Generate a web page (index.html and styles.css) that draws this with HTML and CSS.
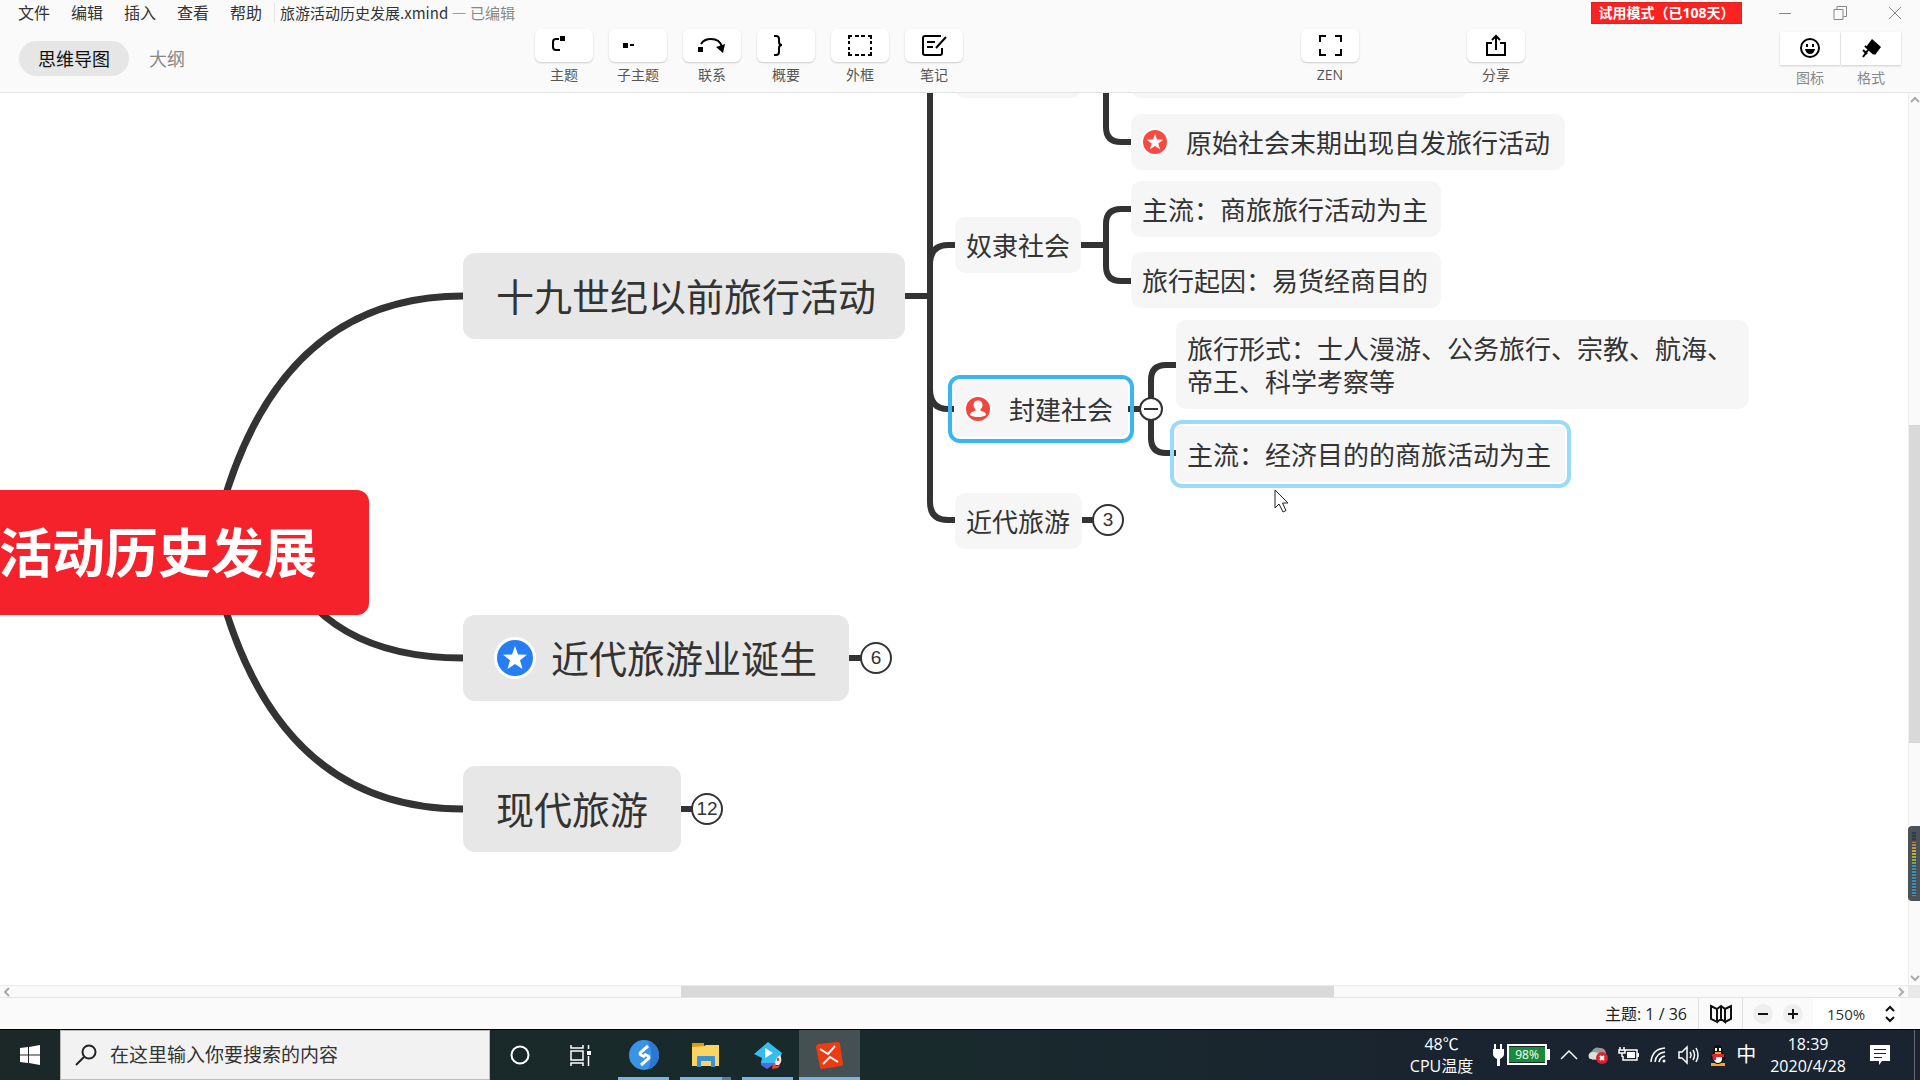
FILE: index.html
```html
<!DOCTYPE html>
<html lang="zh-CN">
<head>
<meta charset="utf-8">
<title>旅游活动历史发展.xmind</title>
<link rel="stylesheet" href="styles.css">
</head>
<body>
<header class="app-header">
  <div class="titlebar">
    <nav class="menu">
      <button>文件</button><button>编辑</button><button>插入</button><button>查看</button><button>帮助</button>
    </nav>
    <div class="doc-title">旅游活动历史发展.xmind <span class="muted">— 已编辑</span></div>
    <button class="trial">试用模式（已108天）</button>
    <div class="window-controls">
      <button aria-label="最小化"><svg width="14" height="14"><path d="M1 7.5h12"/></svg></button>
      <button aria-label="还原"><svg width="14" height="14"><path d="M1 3.5h9v10h-9zM4 3.500v-3h9.500v10h-3"/></svg></button>
      <button aria-label="关闭"><svg width="14" height="14"><path d="M1 1l12 12M13 1L1 13"/></svg></button>
    </div>
  </div>
  <div class="toolbar">
    <div class="views">
      <button class="view active">思维导图</button>
      <button class="view">大纲</button>
    </div>
    <div class="tools">
      <button class="tool"><span class="tool-face"><svg viewBox="0 0 58 33"><path class="l" d="M24 10h-3q-3 0-3 3v5q0 3 3 3h4"/><path d="M25 7h5v5h-5z"/></svg></span>主题</button>
      <button class="tool"><span class="tool-face"><svg viewBox="0 0 58 33"><path d="M14 14h5v5h-5zM21 15h4v2h-4z"/></svg></span>子主题</button>
      <button class="tool"><span class="tool-face"><svg viewBox="0 0 58 33"><path class="l" d="M18 15q3-5 10-5 9 0 11 8"/><path d="M15 18h5v5h-5zM33 18l9-3-2 9z"/></svg></span>联系</button>
      <button class="tool"><span class="tool-face"><svg viewBox="0 0 58 33"><path class="l" d="M17 7h2q3 0 3 3v3q0 3 3 3-3 0-3 3v4q0 3-3 3h-2"/></svg></span>概要</button>
      <button class="tool"><span class="tool-face"><svg viewBox="0 0 58 33"><path class="l" d="M21 7h-3v3M37 7h3v3M21 26h-3v-3M37 26h3v-3M24 7h4M30 7h4M24 26h4M30 26h4M18 12v3M18 18v3M40 12v3M40 18v3"/></svg></span>外框</button>
      <button class="tool"><span class="tool-face"><svg viewBox="0 0 58 33"><path class="l" d="M36 7H20q-2 0-2 2v15q0 2 2 2h15q2 0 2-2v-5M22 13h8M22 18h6M41 8L31 19"/></svg></span>笔记</button>
    </div>
    <div class="tools">
      <button class="tool"><span class="tool-face"><svg viewBox="0 0 58 33"><path class="l" d="M25 7h-6v6M34 7h6v6M25 26h-6v-6M34 26h6v-6"/></svg></span>ZEN</button>
    </div>
    <div class="tools">
      <button class="tool"><span class="tool-face"><svg viewBox="0 0 58 33"><path class="l" d="M25 14h-5v12h18V14h-5M29 21V7M25 11l4-4 4 4"/></svg></span>分享</button>
    </div>
    <div class="panels">
      <button class="tool"><span class="tool-face"><svg viewBox="0 0 60 33"><circle class="l" cx="30" cy="16" r="9"/><path d="M26 12h2v3h-2zM32 12h2v3h-2zM25 17h10q-1 5-5 5t-5-5z"/></svg></span>图标</button>
      <button class="tool"><span class="tool-face"><svg viewBox="0 0 60 33"><path d="M31 7l9 8-6 8-9-8z"/><path class="l" d="M24 14l9 8M27 18l-5 7M22 18l4 4"/></svg></span>格式</button>
    </div>
  </div>
</header>

<main class="workspace">
  <div class="canvas">
    <svg class="links" viewBox="0 93 1908 892">
      <g class="main-links">
        <path d="M211 552Q264 296 463 296"/>
        <path d="M278 552Q323 658 463 658"/>
        <path d="M211 553Q264 809 463 809"/>
      </g>
      <g class="sub-links">
        <path d="M905 296h25"/>
        <path d="M930 93V502q0 18 18 18h7"/>
        <path d="M930 265q0-20 18-20h7"/>
        <path d="M930 389q0 20 18 20h7"/>
        <path d="M1106 93V127q0 15 15 15h10"/>
        <path d="M1081 245h25M1131 209h-10q-15 0-15 15v42q0 15 15 15h10"/>
        <path d="M1128 409h12M1176 365h-10q-15 0-15 15v58q0 15 15 15h10"/>
        <path d="M1082 520h12M849 658h12M681 809h12"/>
      </g>
    </svg>

    <div class="node root">旅游活动历史发展</div>
    <div class="node main n-before">十九世纪以前旅行活动</div>
    <div class="node main n-birth"><svg class="marker" viewBox="0 0 42 42"><circle cx="21" cy="21" r="21" fill="#fff"/><circle cx="21" cy="21" r="18" fill="#267ef5"/><path fill="#fff" d="M21 9l3 8.500 9 .300-7 5.500 2.500 8.700-7.500-5-7.500 5 2.500-8.700-7-5.500 9-.300z"/></svg><span>近代旅游业诞生</span></div>
    <div class="node main n-modern">现代旅游</div>

    <div class="node sub n-cut1"></div>
    <div class="node sub n-cut2"></div>
    <div class="node sub n-primitive"><svg class="marker" viewBox="0 0 28 28"><circle cx="14" cy="14" r="14" fill="#fff"/><circle cx="14" cy="14" r="12" fill="#f74a41"/><path fill="#fff" d="M14 6l2 5.600 6 .200-4.700 3.700 1.700 5.800-5-3.400-5 3.400 1.700-5.800L6 11.800l6-.200z"/></svg>原始社会末期出现自发旅行活动</div>
    <div class="node sub n-slave">奴隶社会</div>
    <div class="node sub n-trade">主流：商旅旅行活动为主</div>
    <div class="node sub n-cause">旅行起因：易货经商目的</div>
    <div class="node sub n-feudal selected"><svg class="marker" viewBox="0 0 28 28"><circle cx="14" cy="14" r="14" fill="#fff"/><circle cx="14" cy="14" r="12" fill="#f0483f"/><path fill="#fff" d="M14 5.500c3 0 4.500 2 4.500 4.500 0 2-1 3.500-2 4.300v1.500c2 .700 5.500 1.500 5.500 4.200-2 1.500-5 2-8 2s-6-.500-8-2c0-2.700 3.500-3.500 5.500-4.200v-1.500c-1-.800-2-2.300-2-4.300 0-2.500 1.500-4.500 4.500-4.500z"/></svg>封建社会</div>
    <div class="node sub n-forms">旅行形式：士人漫游、公务旅行、宗教、航海、<br>帝王、科学考察等</div>
    <div class="node sub n-economy hovered">主流：经济目的的商旅活动为主</div>
    <div class="node sub n-recent">近代旅游</div>

    <button class="fold f-feudal" aria-label="收起"></button>
    <button class="count c-recent">3</button>
    <button class="count c-birth">6</button>
    <button class="count c-modern">12</button>
    <svg class="cursor" viewBox="0 0 15 24"><path d="M1 1v18l4-4 4 8 3-1.500-3.500-7.500H14z" fill="#fff" stroke="#222"/></svg>
  </div>
  <div class="scroll-v">
    <svg width="12" height="14"><path d="M2 9l4-4 4 4"/></svg>
    <span class="before"></span><span class="thumb"></span><span class="after"></span>
    <svg width="12" height="14"><path d="M2 5l4 4 4-4"/></svg>
    <div class="meter"><i></i></div>
  </div>
  <div class="scroll-h">
    <svg width="14" height="12"><path d="M9 2L5 6l4 4"/></svg>
    <span class="before"></span><span class="thumb"></span><span class="after"></span>
    <svg width="14" height="12"><path d="M5 2l4 4-4 4"/></svg>
  </div>
  <div class="scroll-corner"></div>
</main>

<footer class="statusbar">
  <span class="topic-count">主题: 1 / 36</span>
  <button class="map-toggle" aria-label="导航图"><svg width="22" height="20"><path d="M1 2l6 3v13l-6-3zM7 5l4-3 4 3v13l-4-3-4 3M15 5l6-3v13l-6 3M11 2v13"/></svg></button>
  <div class="zoom-buttons">
    <button aria-label="缩小"><svg width="20" height="20"><path d="M5 10h10"/></svg></button>
    <button aria-label="放大"><svg width="20" height="20"><path d="M5 10h10M10 5v10"/></svg></button>
  </div>
  <label class="zoom-level">
    <select aria-label="缩放比例"><option>150%</option></select>
    <svg width="12" height="18"><path d="M2 6l4-4 4 4M2 12l4 4 4-4"/></svg>
  </label>
</footer>

<div class="taskbar">
  <button class="start" aria-label="开始"><svg width="20" height="20"><path fill="#fff" d="M0 3l8-1v7.500H0zM9 2l11-2v9.500H9zM0 10.500h8V18l-8-1zM9 10.500h11V20L9 18z"/></svg></button>
  <label class="search">
    <svg width="22" height="22"><circle cx="14" cy="8" r="6.500"/><path d="M9 13l-8 8"/></svg>
    <input type="text" aria-label="搜索" placeholder="在这里输入你要搜索的内容">
  </label>
  <div class="apps">
    <button aria-label="Cortana"><svg width="32" height="32"><circle cx="16" cy="17" r="8.500" fill="none" stroke="#fff" stroke-width="2"/></svg></button>
    <button aria-label="任务视图"><svg width="32" height="32"><path fill="none" stroke="#fff" stroke-width="1.500" d="M5 7v3h12V7M5 13h12v9H5zM5 28v-3h12v3M22.500 7v4M22.500 18v10"/><path fill="#fff" d="M21 13h4v4h-4z"/></svg></button>
    <button class="running" aria-label="浏览器"><svg width="32" height="32"><circle cx="16" cy="17" r="15" fill="#3b93e8"/><path fill="#2a78d4" d="M20 3q11 4 11 14t-11 14q7-14 0-28z"/><path fill="none" stroke="#fff" stroke-width="3" d="M20 8l-7 6q-2 2 0 3l4 2M13 27l7-6q2-2 0-3l-4-2"/></svg></button>
    <button class="running grouped" aria-label="文件资源管理器"><svg width="32" height="32"><path fill="#d99a16" d="M2 5h12v6H2z"/><path fill="#fcd461" d="M2 9l12-1 2-1h13v21H2z"/><path fill="#3d91d6" d="M7 29V19q0-1 1-1h16q1 0 1 1v10h-4v-6H11v6z"/></svg></button>
    <button class="running" aria-label="视频播放器"><svg width="32" height="32"><path fill="#5668dd" d="M9 23l6 2 8-2-2 4-6 4-6-4z"/><path fill="#35bdf2" d="M16 4l14 11-4 10H9l1-5-8-4z"/><path fill="#fff" d="M13 10l8 5-8 5z"/><path fill="#f5eeee" d="M28 17q-5 3-5 10h4q4-4 1-10z"/><path fill="#e8483c" d="M21 25h2l1 3 4-1-2 3-6 1zM25 20h2v3h-2z"/></svg></button>
    <button class="running current" aria-label="XMind"><svg width="32" height="32"><path fill="#ee3c12" d="M4 6l20-2q2 0 2 2l3 20q0 2-2 2L8 31q-2 0-2-2L2 9q0-2 2-3z"/><path fill="none" stroke="#fff" stroke-width="2" d="M6 11l8 5 7-8M9 26l7-7 8 5"/></svg></button>
  </div>
  <div class="tray">
    <div class="cpu">48℃<br>CPU温度</div>
    <svg width="60" height="24"><path fill="#fff" d="M3 1h2v5h4V1h2v5h2v5q0 3-4 5v7H6v-7q-4-2-4-5V6h1z"/><path fill="none" stroke="#fff" stroke-width="2" d="M17 2h38v19H17z"/><path fill="#178d3c" d="M18 4h36v15H18z"/><path fill="#fff" d="M56 6h3v11h-3z"/><text x="36" y="16" text-anchor="middle" class="battery-text">98%</text></svg>
    <svg width="18" height="20"><path class="w" d="M1 14l8-8 8 8"/></svg>
    <svg width="22" height="20"><path fill="#999" d="M4 12q-4-3 1-6 3-5 8-3 5 0 6 5v7H5z"/><path fill="#ddd" d="M2 13q-2-5 4-6 6-1 9 7H3z"/><circle cx="15" cy="13" r="6" fill="#dc2430"/><path stroke="#fff" stroke-width="2" d="M13 11l4 4M17 11l-4 4"/></svg>
    <svg width="22" height="20"><path class="w" d="M6 5h13v10H5v-4M2 2v3M6 2v3M1 5h6v3H1zM4 8v4"/><path fill="#fff" d="M9 7h8v6H9zM19 8h2v4h-2z"/></svg>
    <svg width="20" height="20"><path class="w" d="M2 17Q3 4 16 3M6 17q1-9 10-10M10 17q1-5 6-6"/><circle cx="15" cy="16" r="1.500" fill="#fff"/></svg>
    <svg width="22" height="20"><path class="w" d="M1 7h3l5-5v16l-5-5H1zM12 7q2 3 0 6M15 5q3 5 0 10M18 3q4 7 0 14"/></svg>
    <svg width="18" height="22"><path fill="#f6a91b" d="M2 19h14v3H2z"/><path fill="#111" d="M4 8q0-7 5-7t5 7l3 7-3 1q-1 4-5 4t-5-4l-3-1z"/><path fill="#fff" d="M5 12h8q1 7-4 7t-4-7zM6 4h2v3H6zM10 4h2v3h-2z"/><path fill="#f6a91b" d="M6 8h6v2H6z"/><path fill="#dd2433" d="M3 10h12v3H7v3H4z"/></svg>
    <span class="ime">中</span>
    <div class="clock">18:39<br>2020/4/28</div>
    <svg width="20" height="20"><path fill="#fff" d="M0 0h20v16h-8l-3 4v-4H0z"/><path stroke="#1a2430" d="M4 4.500h12M4 8.500h12M4 12.500h8"/></svg>
    <span class="show-desktop"></span>
  </div>
</div>
</body>
</html>
```
FILE: styles.css
```css
* { box-sizing: border-box; }

body {
  margin: 0;
  min-height: 100vh;
  display: flex;
  flex-direction: column;
  overflow: hidden;
  font-family: "Open Sans", "Noto Sans CJK SC", sans-serif;
  font-size: 16px;
  color: #333;
  background: #fff;
}

button {
  margin: 0;
  padding: 0;
  border: 0;
  background: none;
  font: inherit;
  color: inherit;
  white-space: nowrap;
}

svg { display: block; flex: none; }

/* Header */
.app-header {
  height: 93px;
  background: #fafafa;
  border-bottom: 1px solid #e4e4e4;
}

.titlebar {
  display: flex;
  align-items: center;
  height: 26px;
  padding-right: 18px;
}

.menu {
  display: flex;
  gap: 21px;
  padding: 0 12px 0 18px;
  line-height: 20px;
  border-right: 1px solid #e4e4e4;
}

.doc-title {
  flex: 1;
  padding-left: 5px;
  font-family: "Noto Sans CJK SC", sans-serif;
  font-size: 15px;
  line-height: 20px;
}

.muted { color: #888; }

.trial {
  width: 151px;
  height: 22px;
  margin-right: 36px;
  background: #fb2222;
  border: 1px solid #d22;
  color: #fff;
  font-size: 14px;
  font-weight: 700;
  line-height: 20px;
}

.window-controls { display: flex; gap: 41px; }
.window-controls path { fill: none; stroke: #888; }

.toolbar {
  display: grid;
  grid-template-columns: 535fr 766fr 166fr 313fr 140fr;
  padding-top: 3px;
}

.views {
  display: flex;
  gap: 20px;
  height: 35px;
  margin: 12px 0 0 19px;
  font-size: 18px;
  line-height: 36px;
  color: #888;
}

.view.active {
  width: 110px;
  border-radius: 18px;
  background: #e6e6e6;
  color: #111;
}

.tools { display: flex; gap: 16px; }

.tool {
  display: flex;
  flex-direction: column;
  align-items: center;
  gap: 3px;
  width: 58px;
  font-size: 14px;
  line-height: 20px;
  color: #555;
}

.tool-face {
  width: 100%;
  height: 33px;
  background: #fff;
  border-radius: 6px;
  box-shadow: 0 1px 2px #ccc;
}

.tool svg { width: 100%; height: 33px; fill: #000; }
.tool svg .l { fill: none; stroke: #000; stroke-width: 2; }

.panels { display: flex; gap: 1px; padding-top: 3px; }
.panels .tool { width: 60px; color: #888; }
.panels .tool-face { border-radius: 0; }

/* Workspace */
.workspace {
  flex: 1;
  display: grid;
  grid-template-columns: 1fr 12px;
  grid-template-rows: 1fr 13px;
}

.canvas {
  position: relative;
  overflow: hidden;
  background: #fff;
  font-family: "Noto Sans CJK SC", sans-serif;
}

.links {
  position: absolute;
  left: 0;
  top: 0;
  width: 1908px;
  height: 892px;
  fill: none;
  stroke: #333;
}
.main-links { stroke-width: 7; }
.sub-links { stroke-width: 6; }

.node {
  position: absolute;
  display: flex;
  align-items: center;
  white-space: nowrap;
}

.root {
  left: -159px;
  top: 397px;
  width: 528px;
  height: 125px;
  justify-content: center;
  padding-bottom: 6px;
  border-radius: 12px;
  background: #f6222b;
  color: #fff;
  font-size: 53px;
  font-weight: 700;
}

.main {
  height: 86px;
  padding: 0 0 4px 33px;
  gap: 15px;
  border-radius: 12px;
  background: #e7e7e7;
  font-size: 38px;
}
.main .marker { width: 42px; height: 42px; margin: 4px 0 0 -2px; }

.sub {
  height: 56px;
  padding: 0 0 2px 11px;
  gap: 17px;
  border-radius: 10px;
  background: #f6f6f6;
  font-size: 26px;
  line-height: 33px;
}
.sub .marker { width: 28px; height: 28px; margin: 2px 0 0 -1px; }

.n-before { left: 463px; top: 160px; width: 442px; }
.n-birth { left: 463px; top: 522px; width: 386px; }
.n-modern { left: 463px; top: 673px; width: 218px; }
.n-cut1 { left: 955px; top: -51px; width: 126px; }
.n-cut2 { left: 1131px; top: -51px; width: 337px; }
.n-primitive { left: 1131px; top: 21px; width: 434px; }
.n-trade { left: 1131px; top: 88px; width: 310px; }
.n-cause { left: 1131px; top: 159px; width: 310px; }
.n-slave { left: 955px; top: 124px; width: 126px; }
.n-feudal { left: 954px; top: 288px; width: 174px; }
.n-forms { left: 1176px; top: 227px; width: 573px; height: 89px; }
.n-economy { left: 1176px; top: 333px; width: 389px; }
.n-recent { left: 955px; top: 400px; width: 127px; }

.selected,
.hovered { outline: 4px solid #38b6f1; outline-offset: 2px; border-radius: 6px; }
.hovered { outline-color: #99dbf9; }

.count,
.fold {
  position: absolute;
  border: 2px solid #333;
  border-radius: 50%;
  background: #fff;
}

.count {
  width: 32px;
  height: 32px;
  font-family: "Liberation Sans", sans-serif;
  font-size: 19px;
  line-height: 28px;
}

.fold { width: 24px; height: 24px; }
.fold::before {
  content: "";
  display: block;
  height: 2px;
  margin: 0 3px;
  background: #333;
}

.f-feudal { left: 1139px; top: 304px; }
.c-recent { left: 1092px; top: 411px; }
.c-birth { left: 860px; top: 549px; }
.c-modern { left: 691px; top: 700px; }

.cursor { position: absolute; left: 1274px; top: 396px; width: 15px; height: 24px; }

/* Scrollbars */
.scroll-v,
.scroll-h {
  position: relative;
  display: flex;
  background: #fafafa;
}
.scroll-v { flex-direction: column; border-left: 1px solid #eee; }
.scroll-h { border-top: 1px solid #eaeaea; border-bottom: 1px solid #e4e4e4; }
.scroll-v path, .scroll-h path { fill: none; stroke: #aaa; stroke-width: 2; }
.thumb { background: #d9d9d9; }
.scroll-v .before { flex: 318; }
.scroll-v .thumb { flex: 318; }
.scroll-v .after { flex: 228; }
.scroll-h .before { flex: 667; }
.scroll-h .thumb { flex: 653; }
.scroll-h .after { flex: 560; }
.scroll-corner { background: #e8e8e8; }

.meter {
  position: absolute;
  right: 0;
  bottom: 84px;
  width: 12px;
  height: 75px;
  padding: 6px 4px 5px;
  border-radius: 4px 0 0 4px;
  background: #4b5358;
}
.meter i {
  display: block;
  height: 100%;
  background:
    repeating-linear-gradient(#0000 0 2px, #3b4850 2px 3px),
    linear-gradient(#333a48 0 14%, #b77c38 16%, #c2b33c 32%, #93a845 46%, #3a8fb8 54%);
}

/* Status bar */
.statusbar {
  display: flex;
  align-items: stretch;
  justify-content: flex-end;
  height: 31px;
  padding-right: 20px;
  background: #fafafa;
  color: #222;
  line-height: 32px;
}
.topic-count { padding-right: 11px; }
.map-toggle {
  display: grid;
  place-items: center;
  width: 45px;
  border: solid #e2e2e2;
  border-width: 0 1px;
}
.map-toggle path { fill: none; stroke: #111; stroke-width: 2; }
.zoom-buttons { display: flex; align-items: center; gap: 10px; padding: 0 10px; }
.zoom-buttons button { border-radius: 50%; background: #eee; }
.zoom-buttons path { stroke: #111; stroke-width: 2; }
.zoom-level {
  display: flex;
  align-items: center;
  width: 87px;
  padding: 0 4px 0 14px;
  background: #fff;
}
.zoom-level select {
  flex: 1;
  min-width: 0;
  padding: 0;
  border: 0;
  appearance: none;
  background: none;
  font: inherit;
  font-size: 15px;
  color: #333;
}
.zoom-level path { fill: none; stroke: #111; stroke-width: 2; }

/* Taskbar */
.taskbar {
  display: flex;
  height: 51px;
  border-top: 1px solid #000;
  background: linear-gradient(90deg, #1b2827, #182a2c 45%, #1a2430 75%);
  color: #fff;
}
.start { display: grid; place-items: center; width: 60px; }
.search {
  display: flex;
  align-items: center;
  gap: 13px;
  width: 430px;
  padding-left: 14px;
  border: 1px solid #bbb;
  background: #f2f2f2;
}
.search svg { fill: none; stroke: #222; stroke-width: 2; }
.search input {
  flex: 1;
  min-width: 0;
  padding: 0;
  border: 0;
  background: none;
  font: inherit;
  font-size: 19px;
}
.search input::placeholder { color: #333; opacity: 1; }

.apps { display: flex; gap: 11px; padding-left: 4px; }
.apps button {
  display: grid;
  place-items: center;
  width: 51px;
  border-bottom: 3px solid transparent;
}
.apps .running { border-bottom-color: #76b5e6; }
.apps .grouped {
  border-image: linear-gradient(90deg, #76b5e6 78%, #55809f 78%) 3;
}
.apps .current { width: 61px; margin-left: -5px; background: #445052; }

.tray {
  display: flex;
  align-items: center;
  gap: 9px;
  margin-left: auto;
  padding-right: 5px;
  line-height: 22px;
}
.tray .w { fill: none; stroke: #fff; stroke-width: 1.5; }
.cpu, .clock { text-align: center; }
.cpu { padding-right: 9px; }
.clock { padding: 0 15px 0 5px; }
.battery-text { fill: #fff; font-size: 12px; }
.ime { font-size: 20px; }
.show-desktop { align-self: stretch; width: 1px; margin-left: 15px; background: #667; }
```
